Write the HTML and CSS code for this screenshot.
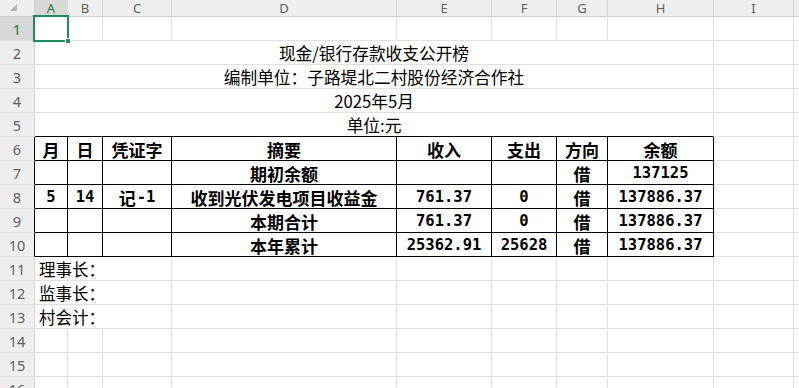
FILE: index.html
```html
<!DOCTYPE html>
<html lang="zh">
<head>
<meta charset="utf-8">
<title>现金/银行存款收支公开榜</title>
<link rel="stylesheet" href="styles.css">
</head>
<body>
<div class="sheet">
  <!-- column header row -->
  <div class="ch corner"><span class="tri"></span></div>
  <div class="ch sel">A</div>
  <div class="ch">B</div>
  <div class="ch">C</div>
  <div class="ch">D</div>
  <div class="ch">E</div>
  <div class="ch">F</div>
  <div class="ch">G</div>
  <div class="ch">H</div>
  <div class="ch">I</div>
  <div class="ch last"></div>

  <!-- row 1 -->
  <div class="rh sel">1</div>
  <div class="c active"><span class="selbox"></span><span class="handle"></span></div>
  <div class="c"></div><div class="c"></div><div class="c"></div><div class="c"></div>
  <div class="c"></div><div class="c"></div><div class="c"></div><div class="c"></div><div class="c last"></div>

  <!-- row 2 -->
  <div class="rh">2</div>
  <div class="c span8 title">现金/银行存款收支公开榜</div>
  <div class="c"></div><div class="c last"></div>

  <!-- row 3 -->
  <div class="rh">3</div>
  <div class="c span8 title">编制单位：子路堤北二村股份经济合作社</div>
  <div class="c"></div><div class="c last"></div>

  <!-- row 4 -->
  <div class="rh">4</div>
  <div class="c span8 title">2025年5月</div>
  <div class="c"></div><div class="c last"></div>

  <!-- row 5 -->
  <div class="rh">5</div>
  <div class="c span8 title tb">单位:元</div>
  <div class="c"></div><div class="c last"></div>

  <!-- row 6 -->
  <div class="rh tl">6</div>
  <div class="c t">月</div>
  <div class="c t">日</div>
  <div class="c t">凭证字</div>
  <div class="c t">摘要</div>
  <div class="c t">收入</div>
  <div class="c t">支出</div>
  <div class="c t">方向</div>
  <div class="c t">余额</div>
  <div class="c"></div><div class="c last"></div>

  <!-- row 7 -->
  <div class="rh tl">7</div>
  <div class="c t"></div>
  <div class="c t"></div>
  <div class="c t"></div>
  <div class="c t">期初余额</div>
  <div class="c t"></div>
  <div class="c t"></div>
  <div class="c t">借</div>
  <div class="c t num">137125</div>
  <div class="c"></div><div class="c last"></div>

  <!-- row 8 -->
  <div class="rh tl">8</div>
  <div class="c t num">5</div>
  <div class="c t num">14</div>
  <div class="c t num"><span class="cjk">记</span>-1</div>
  <div class="c t">收到光伏发电项目收益金</div>
  <div class="c t num">761.37</div>
  <div class="c t num">0</div>
  <div class="c t">借</div>
  <div class="c t num">137886.37</div>
  <div class="c"></div><div class="c last"></div>

  <!-- row 9 -->
  <div class="rh tl">9</div>
  <div class="c t"></div>
  <div class="c t"></div>
  <div class="c t"></div>
  <div class="c t">本期合计</div>
  <div class="c t num">761.37</div>
  <div class="c t num">0</div>
  <div class="c t">借</div>
  <div class="c t num">137886.37</div>
  <div class="c"></div><div class="c last"></div>

  <!-- row 10 -->
  <div class="rh tl">10</div>
  <div class="c t"></div>
  <div class="c t"></div>
  <div class="c t"></div>
  <div class="c t">本年累计</div>
  <div class="c t num">25362.91</div>
  <div class="c t num">25628</div>
  <div class="c t">借</div>
  <div class="c t num">137886.37</div>
  <div class="c"></div><div class="c last"></div>

  <!-- row 11 -->
  <div class="rh">11</div>
  <div class="c span3 label">理事长：</div>
  <div class="c"></div><div class="c"></div><div class="c"></div><div class="c"></div><div class="c"></div><div class="c"></div><div class="c last"></div>

  <!-- row 12 -->
  <div class="rh">12</div>
  <div class="c span3 label">监事长：</div>
  <div class="c"></div><div class="c"></div><div class="c"></div><div class="c"></div><div class="c"></div><div class="c"></div><div class="c last"></div>

  <!-- row 13 -->
  <div class="rh">13</div>
  <div class="c span3 label">村会计：</div>
  <div class="c"></div><div class="c"></div><div class="c"></div><div class="c"></div><div class="c"></div><div class="c"></div><div class="c last"></div>

  <!-- row 14 -->
  <div class="rh">14</div>
  <div class="c"></div><div class="c"></div><div class="c"></div><div class="c"></div><div class="c"></div>
  <div class="c"></div><div class="c"></div><div class="c"></div><div class="c"></div><div class="c last"></div>

  <!-- row 15 -->
  <div class="rh">15</div>
  <div class="c"></div><div class="c"></div><div class="c"></div><div class="c"></div><div class="c"></div>
  <div class="c"></div><div class="c"></div><div class="c"></div><div class="c"></div><div class="c last"></div>

  <!-- row 16 -->
  <div class="rh">16</div>
  <div class="c"></div><div class="c"></div><div class="c"></div><div class="c"></div><div class="c"></div>
  <div class="c"></div><div class="c"></div><div class="c"></div><div class="c"></div><div class="c last"></div>
</div>
</body>
</html>
```
FILE: styles.css
```css
html, body {
  margin: 0;
  padding: 0;
  background: #ffffff;
  overflow: hidden;
}

.sheet {
  display: grid;
  grid-template-columns: 35px 33px 35px 69px 225px 95px 65px 51px 106px 80px 1fr;
  grid-template-rows: 17px repeat(16, 24px);
  width: 799px;
  height: 388px;
  overflow: hidden;
  font-family: "Noto Sans CJK SC", sans-serif;
  color: #000;
}

.ch, .rh, .c {
  box-sizing: border-box;
  border-right: 1px solid #e1e1e1;
  border-bottom: 1px solid #e1e1e1;
  display: flex;
  align-items: center;
  justify-content: center;
  min-width: 0;
  overflow: visible;
  white-space: nowrap;
}

.ch {
  background: #efefef;
  border-right-color: #d6d6d6;
  border-bottom-color: #d0d0d0;
  font-family: "Noto Sans", "Open Sans", sans-serif;
  font-size: 13px;
  color: #5f5f5f;
  line-height: 16px;
  align-items: center;
}

.ch.corner {
  position: relative;
}

.tri {
  position: absolute;
  left: 10px;
  top: 4px;
  width: 0;
  height: 0;
  border-left: 7px solid transparent;
  border-bottom: 7px solid #b4b4b4;
}

.rh {
  background: #efefef;
  border-right-color: #d6d6d6;
  border-bottom-color: #dcdcdc;
  font-family: "Noto Sans", "Open Sans", sans-serif;
  font-size: 14.5px;
  color: #5f5f5f;
  padding-top: 1px;
}

.rh.tl {
  border-right-color: #000;
}

.sel {
  background: #d8d8d8;
  color: #1a7a4c;
}

.c.active {
  position: relative;
}

.selbox {
  position: absolute;
  left: -2px;
  top: -2px;
  width: 36px;
  height: 27px;
  box-sizing: border-box;
  border: 2px solid #1f8b5c;
}

.handle {
  position: absolute;
  left: 30px;
  top: 21px;
  width: 6px;
  height: 6px;
  box-sizing: border-box;
  background: #1f8b5c;
  border: 1px solid #ffffff;
}

.span8 {
  grid-column: span 8;
}

.span3 {
  grid-column: span 3;
}

.title {
  font-size: 16.7px;
  padding-top: 1px;
}

.tb {
  border-bottom-color: #000;
}

.t {
  border-right-color: #000;
  border-bottom-color: #000;
  font-size: 17px;
  font-weight: 700;
  padding-top: 1px;
}

.num {
  font-family: "DejaVu Sans Mono", "Noto Sans CJK SC", monospace;
  font-size: 15.5px;
  font-weight: 700;
}

.cjk {
  font-family: "Noto Sans CJK SC", sans-serif;
  font-size: 17px;
  margin-right: 1px;
}

.label {
  justify-content: flex-start;
  padding-left: 4px;
  font-size: 16.5px;
  padding-top: 1px;
}

.last {
  border-right: none;
}
```
